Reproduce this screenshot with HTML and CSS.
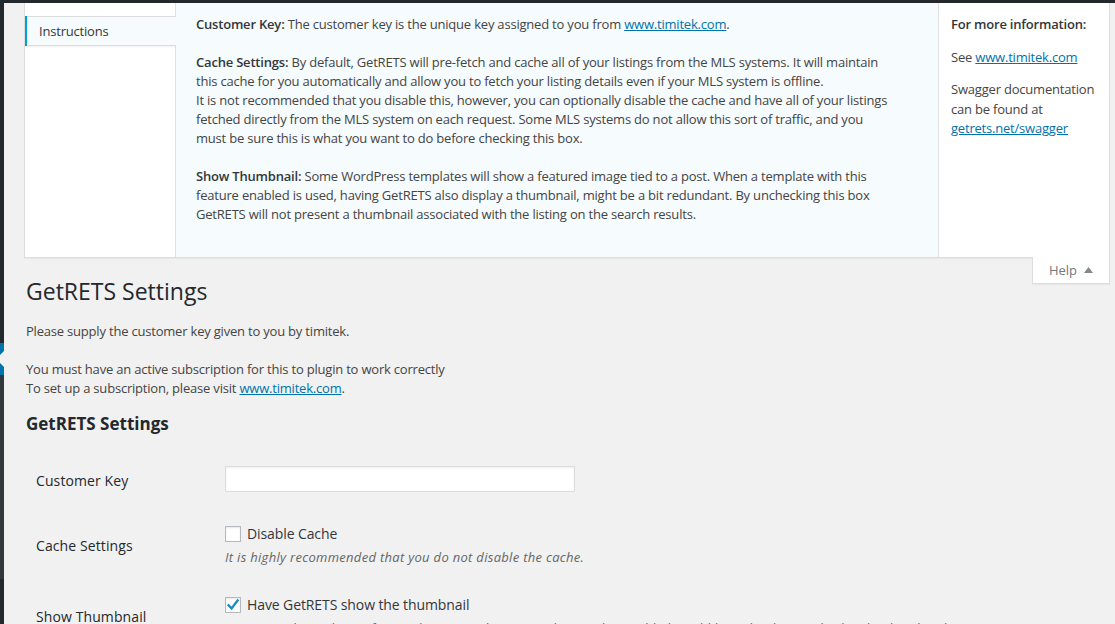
FILE: index.html
```html
<!DOCTYPE html>
<html lang="en">
<head>
<meta charset="utf-8">
<title>GetRETS Settings</title>
<link rel="stylesheet" href="styles.css">
</head>
<body>
<div class="adminbar"></div>
<div class="layout">
  <nav class="adminmenu" aria-label="Admin menu">
    <div class="menu-top"></div>
    <div class="menu-current"><span class="menu-arrow"></span></div>
    <div class="menu-sub"></div>
    <div class="menu-rest"></div>
  </nav>
  <main class="content">
    <section class="screen-meta">
      <div class="help-tabs">
        <ul>
          <li class="active"><a href="#">Instructions</a></li>
        </ul>
      </div>
      <div class="help-main">
        <div class="help-tab-content">
          <p><strong>Customer Key:</strong> The customer key is the unique key assigned to you from <a href="#">www.timitek.com</a>.</p>
          <p><strong>Cache Settings:</strong> By default, GetRETS will pre-fetch and cache all of your listings from the MLS systems. It will maintain this cache for you automatically and allow you to fetch your listing details even if your MLS system is offline.<br>It is not recommended that you disable this, however, you can optionally disable the cache and have all of your listings fetched directly from the MLS system on each request. Some MLS systems do not allow this sort of traffic, and you must be sure this is what you want to do before checking this box.</p>
          <p><strong>Show Thumbnail:</strong> Some WordPress templates will show a featured image tied to a post. When a template with this feature enabled is used, having GetRETS also display a thumbnail, might be a bit redundant. By unchecking this box GetRETS will not present a thumbnail associated with the listing on the search results.</p>
        </div>
      </div>
      <aside class="help-sidebar">
        <p><strong>For more information:</strong></p>
        <p>See <a href="#">www.timitek.com</a></p>
        <p>Swagger documentation can be found at <a href="#">getrets.net/swagger</a></p>
      </aside>
    </section>
    <div class="screen-meta-links">
      <button class="help-toggle" type="button">Help
        <svg class="help-arrow" width="9" height="6" viewBox="0 0 9 6" aria-hidden="true"><polygon points="4.5,0 9,6 0,6"/></svg>
      </button>
    </div>
    <div class="wrap">
      <h1>GetRETS Settings</h1>
      <p class="intro">Please supply the customer key given to you by timitek.</p>
      <p class="intro">You must have an active subscription for this to plugin to work correctly<br>To set up a subscription, please visit <a href="#">www.timitek.com</a>.</p>
      <h2>GetRETS Settings</h2>
      <div class="form-table">
        <div class="row row-key">
          <div class="th">Customer Key</div>
          <div class="td"><input class="text-input" type="text" aria-label="Customer Key"></div>
        </div>
        <div class="row">
          <div class="th">Cache Settings</div>
          <div class="td">
            <div class="check-row"><span class="checkbox"></span><span>Disable Cache</span></div>
            <p class="description">It is highly recommended that you do not disable the cache.</p>
          </div>
        </div>
        <div class="row">
          <div class="th">Show Thumbnail</div>
          <div class="td">
            <div class="check-row"><span class="checkbox checked"><svg width="16" height="16" viewBox="0 0 16 16" aria-hidden="true"><path d="M3.6 8.2 L6.6 11.4 L12.6 3.4" fill="none" stroke="#1e8cbe" stroke-width="2.3" stroke-linecap="square"/></svg></span><span>Have GetRETS show the thumbnail</span></div>
            <p class="description">Some templates show a featured image tied to a post, having this enabled would be redundant to display the thumbnail.</p>
          </div>
        </div>
      </div>
    </div>
  </main>
</div>
</body>
</html>
```

FILE: styles.css
```css
html, body {
  margin: 0;
  padding: 0;
}

body {
  background: #f1f1f1;
  color: #444;
  font-family: "Open Sans", "Noto Sans", sans-serif;
  font-size: 13px;
  line-height: 19px;
  letter-spacing: -0.2px;
  height: 624px;
  overflow: hidden;
}

a {
  color: #0073aa;
  text-decoration: underline;
}

strong {
  font-weight: 600;
  color: #32373c;
}

.adminbar {
  height: 3px;
  background: #23282d;
}

.layout {
  display: flex;
  min-height: 621px;
}

.adminmenu {
  width: 4px;
  flex: none;
  display: flex;
  flex-direction: column;
  overflow: hidden;
  background: #23282d;
}

.menu-top {
  height: 340px;
}

.menu-current {
  height: 32px;
  background: #0073aa;
  display: flex;
  align-items: center;
  justify-content: flex-end;
}

.menu-arrow {
  flex: none;
  width: 0;
  height: 0;
  border-right: 8px solid #f1f1f1;
  border-top: 8px solid transparent;
  border-bottom: 8px solid transparent;
}

.menu-sub {
  height: 204px;
  background: #32373c;
}

.menu-rest {
  flex: 1;
}

.content {
  flex: 1;
  min-width: 0;
  margin: 0 5px 0 20px;
}

/* Help panel */
.screen-meta {
  display: flex;
  height: 254px;
  background: #fff;
  border: 1px solid #ddd;
  border-top: none;
  margin-bottom: -1px;
  box-shadow: 0 1px 1px rgba(0, 0, 0, .04);
}

.help-tabs {
  width: 150px;
  flex: none;
  border-right: 1px solid #e1e1e1;
}

.help-tabs ul {
  margin: 13px 0;
  padding: 0;
  list-style: none;
}

.help-tabs li.active {
  border-left: 2px solid #00a0d2;
  background: #f6fbfd;
  margin-right: -1px;
  box-shadow: 0 2px 0 rgba(0, 0, 0, .02), 0 1px 0 rgba(0, 0, 0, .02);
}

.help-tabs a {
  display: block;
  padding: 5px 5px 5px 12px;
  line-height: 18.2px;
  border-top: 1px solid #dcdcdc;
  border-bottom: 1px solid #dcdcdc;
  color: #32373c;
  text-decoration: none;
}

.help-main {
  flex: 1;
  min-width: 0;
  background: #f6fbfd;
  border-right: 1px solid #e1e1e1;
  padding: 12px 20px 0;
}

.help-tab-content {
  margin-right: 22px;
}

.help-tab-content p {
  margin: 0 0 19px;
}

.help-sidebar {
  width: 150px;
  flex: none;
  padding: 12px 8px 0 12px;
  line-height: 19.5px;
}

.help-sidebar p {
  margin: 0 0 13px;
}

.screen-meta-links {
  height: 0;
  display: flex;
  justify-content: flex-end;
  align-items: flex-start;
}

.help-toggle {
  height: 27px;
  box-sizing: border-box;
  display: flex;
  align-items: center;
  gap: 7px;
  padding: 0 16px 0 16px;
  margin: 0;
  background: #fff;
  border: 1px solid #ddd;
  border-top: none;
  box-shadow: 0 1px 1px rgba(0, 0, 0, .04);
  color: #72777c;
  font: inherit;
  font-size: 13px;
  letter-spacing: 0;
  line-height: 20px;
}

.help-arrow {
  fill: #82878c;
}

/* Settings page */
.wrap {
  margin: 10px 0 0 2px;
}

.wrap h1 {
  font-size: 23px;
  font-weight: 400;
  line-height: 30px;
  letter-spacing: 0;
  margin: 0;
  padding: 9px 0 4px;
  color: #23282d;
}

.intro {
  margin: 19px 0 0;
}

h1 + .intro {
  margin-top: 12px;
}

.wrap h2 {
  font-size: 17px;
  font-weight: 700;
  line-height: 22px;
  letter-spacing: 0;
  margin: 15px 0 16px;
  color: #23282d;
}

.form-table {
  display: flex;
  flex-direction: column;
}

.row {
  display: flex;
  align-items: center;
}

.th {
  width: 179px;
  flex: none;
  padding: 0 0 2px 10px;
  color: #23282d;
  font-size: 14px;
  letter-spacing: 0.1px;
}

.td {
  flex: 1;
  padding: 15px 10px;
}

.text-input {
  display: block;
  box-sizing: border-box;
  width: 350px;
  height: 26px;
  margin: 0 0 4px;
  padding: 3px 5px;
  background: #fff;
  border: 1px solid #ddd;
  box-shadow: inset 0 1px 2px rgba(0, 0, 0, .07);
  font: inherit;
}

.check-row {
  display: flex;
  align-items: center;
  gap: 6px;
  height: 16px;
  line-height: 16px;
  color: #32373c;
  font-size: 14px;
  letter-spacing: -0.1px;
}

.checkbox {
  width: 16px;
  height: 16px;
  flex: none;
  box-sizing: border-box;
  border: 1px solid #b4b9be;
  background: #fff;
  box-shadow: inset 0 1px 2px rgba(0, 0, 0, .1);
  display: flex;
}

.checkbox svg {
  margin: -1px;
}

.description {
  margin: 6px 0 0;
  font-style: italic;
  letter-spacing: 0.3px;
  color: #666;
}
```
